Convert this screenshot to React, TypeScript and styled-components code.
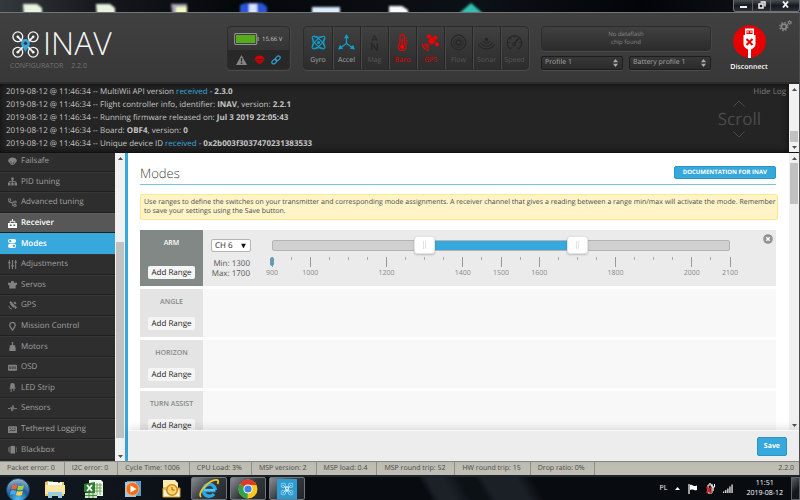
import React, { useState } from "react";
import styled, { createGlobalStyle, css } from "styled-components";

const BLUE = "#37a8db";

const GlobalStyle = createGlobalStyle`
  *, *::before, *::after { box-sizing: border-box; }
  html, body, #root { height: 100%; }
  body {
    margin: 0;
    overflow: hidden;
    background: #0a0e14;
    font-family: "Open Sans", "Noto Sans", sans-serif;
    font-size: 8px;
    line-height: 10px;
    color: #555;
    text-rendering: geometricPrecision;
  }
  button, select, input { font: inherit; margin: 0; text-rendering: inherit; }
  button { cursor: pointer; }
  h1, h2, p, ul { margin: 0; padding: 0; font-weight: inherit; }
  ul { list-style: none; }
  svg { display: block; }
`;

const Desktop = styled.div`
  display: flex;
  flex-direction: column;
  height: 100vh;
  min-height: 0;
`;

/* ---------- window frame ---------- */

const TitleBar = styled.div`
  position: relative;
  display: flex;
  justify-content: flex-end;
  flex: none;
  height: 12px;
  overflow: hidden;
  background: linear-gradient(90deg, #34393d 0, #15181c 12%, #05080b 30%, #0c1117 60%, #020408 80%, #10151b 100%);
`;

const Backdrop = styled.svg`
  position: absolute;
  inset: 0;
`;

const WindowButtons = styled.div`
  position: relative;
  display: flex;
  border: 1px solid #6e7276;
  border-top: 0;
  border-radius: 0 0 3px 3px;
  background: linear-gradient(#4a4f55, #171b20 50%, #2a2f35);
`;

const WindowButton = styled.button<{ $wide?: boolean }>`
  display: grid;
  place-items: center;
  width: ${(p) => (p.$wide ? 29 : 18)}px;
  padding: 0 0 2px;
  border: 0;
  border-left: 1px solid #5a5e63;
  background: none;
  color: #f2f2f2;
  &:first-child { border-left: 0; }
`;

const Window = styled.div`
  display: flex;
  flex-direction: column;
  flex: 1;
  min-height: 0;
  border-top: 1px solid #74777a;
  border-right: 1px solid #4a4d50;
`;

/* ---------- header ---------- */

const Header = styled.header`
  display: flex;
  align-items: flex-start;
  flex: none;
  padding: 13px 7px 9px 10px;
  gap: 13px;
  background: linear-gradient(#3f403f, #373837);
  border-bottom: 2px solid #2c2c2c;
`;

const Brand = styled.div`
  flex: 1;
  padding-left: 2px;
  color: #f4f4f4;
`;

const BrandRow = styled.div`
  display: flex;
  align-items: center;
  gap: 4px;
  height: 36px;
`;

const BrandName = styled.span`
  font-size: 32px;
  line-height: 36px;
  font-weight: 300;
`;

const BrandNote = styled.p`
  display: flex;
  gap: 8px;
  margin-left: -2px;
  color: #747574;
  font-size: 7px;
`;

const panel = css`
  border: 1px solid #2c2c2c;
  border-radius: 4px;
  box-shadow: 0 1px 0 #4b4b4b, 1px 0 0 #464646;
  background: linear-gradient(#404040, #2c2c2c);
`;

const BatteryPanel = styled.div`
  ${panel}
  display: flex;
  flex-direction: column;
  width: 63px;
  height: 44px;
  overflow: hidden;
`;

const BatteryTop = styled.div`
  display: flex;
  align-items: center;
  gap: 3px;
  height: 23px;
  padding: 0 0 0 6px;
  color: #c8c8c8;
  font-size: 6px;
  white-space: nowrap;
`;

const BatteryBottom = styled.div`
  display: flex;
  align-items: center;
  justify-content: space-between;
  flex: 1;
  padding: 0 8px;
  background: #282828;
`;

const Sensors = styled.ul`
  ${panel}
  display: flex;
  height: 44px;
`;

const tones = { on: "#0f9fce", off: "#272727", bad: "#f00000" };
type Tone = keyof typeof tones;

const Sensor = styled.li<{ $tone: Tone }>`
  display: flex;
  flex-direction: column;
  align-items: center;
  justify-content: space-between;
  width: 28px;
  padding: 7px 0 3px;
  border-left: 1px solid #262626;
  box-shadow: inset 1px 0 0 #484848;
  color: ${(p) => tones[p.$tone]};
  &:first-child { border-left: 0; box-shadow: none; }
`;

const SensorLabel = styled.span<{ $tone: Tone }>`
  color: ${(p) => (p.$tone === "on" ? "#a8a8a8" : p.$tone === "bad" ? "#c00808" : "#565656")};
  font-size: 7px;
  font-weight: ${(p) => (p.$tone === "bad" ? 600 : 400)};
`;

const Profiles = styled.div`
  display: flex;
  flex-direction: column;
  gap: 5px;
  width: 170px;
  margin-left: -1px;
`;

const Dataflash = styled.p`
  ${panel}
  height: 25px;
  padding: 3px 30px 0;
  text-align: center;
  line-height: 8px;
  font-size: 6px;
  color: #858585;
`;

const ProfileRow = styled.div`
  display: grid;
  grid-template-columns: 1fr 1fr;
  gap: 6px;
`;

const SelectBox = styled.label`
  position: relative;
  display: block;
`;

const SelectArrow = styled.svg`
  position: absolute;
  top: 50%;
  right: 5px;
  transform: translateY(-50%);
  pointer-events: none;
`;

const DarkSelect = styled.select`
  appearance: none;
  display: block;
  width: 100%;
  height: 14px;
  padding: 0 3px;
  border: 1px solid #1d1d1d;
  border-radius: 2px;
  box-shadow: 0 1px 0 #4c4c4c;
  background: linear-gradient(#373737, #2b2b2b);
  color: #a4a4a4;
  font-size: 7px;
  line-height: 12px;
`;

const ConnectButton = styled.button`
  display: flex;
  flex-direction: column;
  align-items: center;
  gap: 5px;
  width: 40px;
  margin: -1px 0 0 5px;
  padding: 0;
  border: 0;
  background: none;
  color: #fff;
  font-size: 7px;
  font-weight: 600;
`;

const GearButton = styled.button`
  margin: -7px 0 0 -3px;
  padding: 0;
  border: 0;
  background: none;
  color: #858585;
`;

/* ---------- log ---------- */

const LogArea = styled.section`
  display: flex;
  flex: none;
  border-bottom: 1px solid #111;
  background: #242424;
`;

const LogBody = styled.div`
  display: flex;
  flex: 1;
  padding: 1px 3px 2px 6px;
  color: #c4c4c4;
  line-height: 13px;
  box-shadow: inset 0 0 6px #0c0c0c;
`;

const LogLines = styled.div`
  flex: 1;
  a { color: ${BLUE}; text-decoration: none; }
  b { font-weight: 700; }
`;

const LogSide = styled.div`
  display: flex;
  flex-direction: column;
  align-items: flex-end;
  color: #666;
`;

const HideLog = styled.button`
  padding: 0;
  border: 0;
  background: none;
  color: #7a7a7a;
  line-height: 13px;
`;

const ScrollHint = styled.div`
  display: flex;
  flex-direction: column;
  align-items: center;
  margin: 2px 25px 0 0;
  color: #4b4b4b;
  font-size: 17px;
  line-height: 24px;
`;

/* ---------- scroll bar ---------- */

const Bar = styled.div`
  display: flex;
  flex-direction: column;
  align-items: center;
  flex: none;
  width: 10px;
  background: #f1f1f1;
`;

const BarEnd = styled.div`
  display: grid;
  place-items: center;
  height: 10px;
  color: #505050;
`;

const BarSpace = styled.div<{ $grow: number }>`
  flex: ${(p) => p.$grow} 1 0;
`;

const BarThumb = styled(BarSpace)`
  width: 8px;
  background: #c1c1c1;
`;

const Triangle = ({ down }: { down?: boolean }) => (
  <svg width="5" height="3" viewBox="0 0 5 3" fill="currentColor">
    <path d={down ? "M0 0h5L2.500 3z" : "M0 3h5L2.500 0z"} />
  </svg>
);

const ScrollBar = ({ before, thumb, after }: { before: number; thumb: number; after: number }) => (
  <Bar aria-hidden>
    <BarEnd><Triangle /></BarEnd>
    <BarSpace $grow={before} />
    <BarThumb $grow={thumb} />
    <BarSpace $grow={after} />
    <BarEnd><Triangle down /></BarEnd>
  </Bar>
);

/* ---------- navigation ---------- */

const Main = styled.div`
  display: flex;
  flex: 1;
  min-height: 0;
  background: #fff;
`;

const Nav = styled.nav`
  display: flex;
  flex: none;
  border-right: 3px solid ${BLUE};
  overflow: hidden;
`;

const NavList = styled.ul`
  display: flex;
  flex-direction: column;
  width: 115px;
  margin-top: -2px;
  padding-bottom: 1px;
  background: #2e2e2e;
`;

const NavItem = styled.li`
  display: flex;
  flex: 1;
  min-height: 0;
`;

const NavLink = styled.a<{ $state?: "hover" | "active" }>`
  display: flex;
  align-items: center;
  flex: 1;
  gap: 4px;
  padding-left: 8px;
  border-top: 1px solid #383838;
  border-bottom: 1px solid #202020;
  background: #2e2e2e;
  color: #a0a0a0;
  text-decoration: none;
  svg { color: #828282; }
  ${(p) =>
    p.$state === "hover" &&
    css`
      background: #575757;
      color: #fff;
      font-weight: 600;
      border-top-color: #606060;
      svg { color: #fff; }
    `}
  ${(p) =>
    p.$state === "active" &&
    css`
      background: ${BLUE};
      color: #fff;
      font-weight: 600;
      border-top-color: ${BLUE};
      border-bottom-color: ${BLUE};
      svg { color: #fff; }
    `}
`;

/* ---------- content ---------- */

const Column = styled.div`
  display: flex;
  flex-direction: column;
  flex: 1;
  min-width: 0;
`;

const Scroller = styled.div`
  display: flex;
  flex: 1;
  min-height: 0;
`;

const Content = styled.main`
  flex: 1;
  min-width: 0;
  padding: 10px 13px 0 12px;
  overflow: hidden;
`;

const TitleRow = styled.div`
  display: flex;
  align-items: center;
  justify-content: space-between;
  height: 22px;
  padding-bottom: 2px;
  border-bottom: 1px solid #7cc0e4;
`;

const Title = styled.h1`
  font-size: 13px;
  line-height: 18px;
  font-weight: 300;
  color: #444;
`;

const DocLink = styled.a`
  padding: 1px 8px;
  border: 1px solid #2a95c7;
  border-radius: 2px;
  background: ${BLUE};
  color: #fff;
  font-size: 6px;
  line-height: 9px;
  font-weight: 700;
  text-decoration: none;
`;

const Note = styled.p`
  margin: 9px -2px 10px 0;
  padding: 3px 0 3px 3px;
  border: 1px solid #fbe88a;
  border-radius: 2px;
  background: #fff4c8;
  color: #4a4a4a;
  font-size: 7px;
  line-height: 9px;
`;

const Modes = styled.div`
  display: flex;
  flex-direction: column;
  gap: 3px;
`;

const ModeRow = styled.section<{ $on?: boolean }>`
  display: flex;
  min-height: ${(p) => (p.$on ? 56 : 48)}px;
  background: ${(p) => (p.$on ? "#ebebeb" : "#f8f8f8")};
`;

const ModeHead = styled.div<{ $on?: boolean }>`
  display: flex;
  flex-direction: column;
  align-items: center;
  justify-content: space-between;
  width: 63px;
  padding: 9px 0 7px;
  background: ${(p) => (p.$on ? "#828885" : "#e4e4e4")};
  color: ${(p) => (p.$on ? "#fff" : "#828885")};
`;

const ModeName = styled.h2`
  font-size: 7px;
  line-height: 10px;
  font-weight: 600;
`;

const AddButton = styled.button`
  padding: 0 3px;
  border: 0;
  border-radius: 2px;
  background: #f5f5f5;
  color: #222;
  line-height: 13px;
`;

const Range = styled.div`
  display: flex;
  flex: 1;
  align-items: flex-start;
  padding: 4px 3px 0 8px;
`;

const Channel = styled.div`
  display: flex;
  flex-direction: column;
  gap: 7px;
  width: 40px;
  margin: 5px 21px 0 0;
`;

const ChannelSelect = styled.select`
  appearance: none;
  display: block;
  width: 100%;
  height: 13px;
  padding: 0 3px;
  border: 1px solid #b5b5b5;
  border-radius: 2px;
  background: #fff;
  color: #222;
  line-height: 11px;
`;

const Limits = styled.div`
  padding-right: 1px;
  text-align: right;
  white-space: nowrap;
  color: #555;
`;

const Slider = styled.div`
  flex: 1;
  margin-right: 33px;
  padding-top: 6px;
`;

const Track = styled.div`
  position: relative;
  height: 11px;
  border: 1px solid #b4b4b4;
  border-radius: 2px;
  background: #d0d0d0;
`;

const Fill = styled.div`
  position: absolute;
  top: 0;
  bottom: 0;
  background: ${BLUE};
`;

const Thumb = styled.input`
  appearance: none;
  position: absolute;
  top: -5px;
  left: -11px;
  width: calc(100% + 22px);
  height: 18px;
  background: none;
  pointer-events: none;
  &::-webkit-slider-thumb {
    appearance: none;
    pointer-events: auto;
    width: 21px;
    height: 18px;
    border: 1px solid #e3e3e3;
    border-radius: 3px;
    background:
      linear-gradient(90deg, #e2e2e2 1px, transparent 1px 2px, #e2e2e2 2px) center / 3px 8px no-repeat,
      #fff;
    box-shadow: 0 1px 2px rgba(0, 0, 0, 0.2);
  }
`;

const Scale = styled.div`
  position: relative;
  height: 28px;
  margin-top: 6px;
`;

const Tick = styled.div<{ $major?: boolean }>`
  position: absolute;
  display: flex;
  flex-direction: column;
  align-items: center;
  gap: 2px;
  width: 20px;
  margin-left: -10px;
  color: #8a8a8a;
  font-size: 7px;
  &::before {
    content: "";
    width: 1px;
    height: ${(p) => (p.$major ? 10 : 3)}px;
    background: ${(p) => (p.$major ? "#999" : "#aaa")};
  }
`;

const Marker = styled.div`
  position: absolute;
  top: 0;
  width: 4px;
  height: 9px;
  margin-left: -2px;
  border: 1px solid #8a9298;
  border-radius: 2px;
  background: ${BLUE};
`;

const CloseButton = styled.button`
  padding: 0;
  border: 0;
  background: none;
  color: #919191;
`;

const Toolbar = styled.footer`
  display: flex;
  align-items: center;
  justify-content: flex-end;
  flex: none;
  height: 31px;
  padding-right: 12px;
  border-top: 1px solid #fafafa;
  background: #ededed;
  box-shadow: 0 -2px 8px rgba(0, 0, 0, 0.12);
  z-index: 1;
`;

const SaveButton = styled.button`
  padding: 3px 6px;
  border: 1px solid #2a95c7;
  border-radius: 2px;
  background: ${BLUE};
  color: #fff;
  font-size: 7px;
  font-weight: 700;
  line-height: 11px;
`;

/* ---------- status bar ---------- */

const StatusBar = styled.div`
  display: flex;
  flex: none;
  border-top: 1px solid #8b8b86;
  background: #bfbeb4;
  color: #4a4a4a;
  font-size: 7px;
  line-height: 13px;
`;

const Status = styled.span`
  padding: 0 9px 0 7px;
  border-right: 1px solid #8f8f88;
`;

const Version = styled.span`
  margin-left: auto;
  padding-right: 5px;
`;

/* ---------- task bar ---------- */

const TaskBar = styled.div`
  display: flex;
  align-items: stretch;
  flex: none;
  height: 25px;
  border-top: 2px solid #1c242c;
  background: linear-gradient(60deg, #10161d 0 12%, #080c11 30% 53%, #1b2127 54% 56%, #0c1116 58% 60%, #1a2026 61% 65%, #080c11 67%);
  color: #fff;
`;

const Task = styled.button<{ $open?: boolean }>`
  display: grid;
  place-items: center;
  width: ${(p) => (p.$open ? 36 : 39)}px;
  margin-right: ${(p) => (p.$open ? 3 : 0)}px;
  padding: 0;
  border: 1px solid ${(p) => (p.$open ? "#70757a" : "transparent")};
  border-radius: 2px;
  background: ${(p) => (p.$open ? "linear-gradient(135deg, #8a8e92, #33383d 50%, #22272c)" : "none")};
`;

const StartButton = styled(Task)`
  width: 35px;
`;

const Tray = styled.div`
  display: flex;
  align-items: center;
  margin-left: auto;
  gap: 8px;
`;

const Language = styled.span`
  margin-right: 0;
  font-size: 7px;
`;

const Clock = styled.time`
  margin: 0 8px 0 5px;
  text-align: center;
  font-size: 7px;
  line-height: 10px;
`;

const ShowDesktop = styled.button`
  align-self: stretch;
  width: 9px;
  margin-left: -8px;
  padding: 0;
  border: 1px solid #5b6065;
  background: linear-gradient(135deg, #5b6065, #14181d 60%);
`;

/* ---------- drawings ---------- */

const rotors = [[5.6, 5.6], [20.4, 5.6], [5.6, 20.4], [20.4, 20.4]];

const Quad = ({ size, pin = BLUE, hole = "#3b3c3b", color = "#f4f4f4" }: { size: number; pin?: string; hole?: string; color?: string }) => (
  <svg width={size} height={size} viewBox="0 0 26 26" fill="none" stroke={color} strokeWidth="1.300">
    {rotors.map(([x, y]) => (
      <g key={`${x}-${y}`}>
        <circle cx={x} cy={y} r="4.700" />
        <circle cx={x} cy={y} r="1.300" fill={color} stroke="none" />
      </g>
    ))}
    <path d="M5.600 5.600L11 11M20.400 5.600L15 11M5.600 20.400l6-6M20.400 20.400l-6-6" strokeWidth="1.600" />
    <path d="M13 20.500c-1-3.500-4.200-5.500-4.200-8.700a4.200 4.200 0 0 1 8.400 0c0 3.200-3.200 5.200-4.200 8.700z" fill={pin} stroke="none" />
    <circle cx="13" cy="11.800" r="1.700" fill={hole} stroke="none" />
  </svg>
);

const sensorArt: Record<string, React.ReactNode> = {
  Gyro: (
    <g fill="none" stroke="currentColor" strokeWidth="1.100">
      <ellipse cx="8" cy="8" rx="3" ry="8.300" transform="rotate(45 8 8)" />
      <ellipse cx="8" cy="8" rx="3" ry="8.300" transform="rotate(-45 8 8)" />
      <path d="M4 2.500h8M4 13.500h8M2.500 4v8M13.500 4v8" strokeWidth=".9" />
      <circle cx="8" cy="8" r="1" fill="currentColor" />
    </g>
  ),
  Accel: (
    <g fill="currentColor">
      <path d="M8 2v7l-5.500 4M8 9l5.500 4" fill="none" stroke="currentColor" strokeWidth="1.300" />
      <path d="M8-.500l2.500 4.300h-5zM-.500 15l2-4.700 3 4zM16.500 15l-2-4.700-3 4z" />
    </g>
  ),
  Mag: (
    <g fill="none" stroke="currentColor" strokeWidth="1.400">
      <path d="M5.500 6L8 .500 10.500 6 8 4.800z" strokeWidth="1" />
      <path d="M5.200 16V9l5.600 7V9" />
    </g>
  ),
  Baro: (
    <g>
      <path d="M5.500 9V2.300a2.200 2.200 0 0 1 4.400 0V9a3.900 3.900 0 1 1-4.400 0z" fill="none" stroke="currentColor" strokeWidth="1.100" />
      <circle cx="7.700" cy="12.300" r="2.200" fill="currentColor" />
      <path d="M7.700 4v8M11.500 3.500h1.500M11.500 6h1.500M11.500 8.500h1.500" stroke="currentColor" strokeWidth="1.100" />
    </g>
  ),
  GPS: (
    <g fill="currentColor">
      <rect x="6.500" y="3.500" width="5.500" height="6" rx="1.500" transform="rotate(45 9.200 6.500)" />
      <path d="M6-.500l3.500 2L7.500 4.500 4 2.500zM12 9.500l2-2.500 3 2.500-2 3zM12.500.500l3 2.500-2.500 2.500-2.500-2z" />
      <path d="M6.500 11.500A3.500 3.500 0 0 1 4 9" stroke="currentColor" strokeWidth="1.400" fill="none" />
      <path d="M6.500 13.700A5.500 5.500 0 0 1 2 9M6.500 16A8 8 0 0 1-.300 9" fill="none" stroke="currentColor" strokeWidth="1.200" />
    </g>
  ),
  Flow: (
    <g fill="none" stroke="currentColor" strokeWidth="1.200">
      <circle cx="8" cy="8" r="7.300" /><circle cx="8" cy="8" r="4.800" strokeWidth=".8" />
      <circle cx="8" cy="8" r="2.400" strokeWidth="1.500" />
    </g>
  ),
  Sonar: (
    <g fill="none" stroke="currentColor" strokeWidth="1.200">
      <circle cx="8" cy="5" r="1.200" fill="currentColor" />
      <path d="M4.500 6.500a3.800 3.800 0 0 0 7 0M2 8a6.700 6.700 0 0 0 12 0M-.300 9.500c3.500 6.500 13.100 6.500 16.600 0" />
    </g>
  ),
  Speed: (
    <g fill="none" stroke="currentColor" strokeWidth="1.200">
      <path d="M4 14.500a7.300 7.300 0 1 1 8 0" />
      <path d="M8 1v2.500M1 8h2.500M12.500 8H15M3 3l1.700 1.700M4 14.500l1-1.500M12 14.500L11 13" />
      <path d="M7.500 9.500L12 4" strokeWidth="1.800" /><circle cx="7.500" cy="9.800" r="1.300" />
    </g>
  ),
};

const sensors: [string, Tone][] = [
  ["Gyro", "on"], ["Accel", "on"], ["Mag", "off"], ["Baro", "bad"],
  ["GPS", "bad"], ["Flow", "off"], ["Sonar", "off"], ["Speed", "off"],
];

const Parachute = () => (
  <path d="M0 4.500C.5 1.500 2.500.5 5 .5s4.500 1 5 4L6.200 9H3.800zM2.500 5l2 3M7.500 5l-2 3" fill="currentColor" />
);

const navItems: [string, React.ReactNode][] = [
  ["Failsafe", <><Parachute /><path d="M3 5l1.500 3.500M7 5L5.500 8.500" stroke="#2e2e2e" strokeWidth=".6" /></>],
  ["PID tuning", <><path d="M3.700.500h2.600v3H3.700zM0 6.500h2.700v3H0zM3.700 6.500h2.600v3H3.700zM7.300 6.500H10v3H7.300z" fill="currentColor" /><path d="M5 3v4M1.300 7V5h7.400v2" stroke="currentColor" strokeWidth=".9" fill="none" /></>],
  ["Advanced tuning", <path d="M.5 1h2.500v2.500H.5zM1.500 3.500V5H5v3.500h1.500M5 4.500h1.500M6.500 3.500H9v2H6.500zM6.500 7.200H9v2H6.500z" stroke="currentColor" fill="none" />],
  ["Receiver", <><path d="M0 4.500h10V10H0z" fill="currentColor" /><path d="M2.500 4.500V2.500h5v2M5 2.500V0" stroke="currentColor" fill="none" /><path d="M2 6.200h2v1.500H2zM6 6.200h2v1.500H6z" fill="#575757" /></>],
  ["Modes", <><rect x="0" y="0" width="9" height="4.600" rx="2.300" fill="currentColor" /><rect x="0" y="5.400" width="9" height="4.600" rx="2.300" fill="currentColor" /><circle cx="2.500" cy="2.300" r="1.300" fill={BLUE} /><circle cx="6.500" cy="7.700" r="1.300" fill={BLUE} /></>],
  ["Adjustments", <path d="M1.500 0v10M5 0v10M8.500 0v10M0 3h3M3.500 6.500h3M7 2.500h3" stroke="currentColor" strokeWidth="1.200" />],
  ["Servos", <path d="M3.500 1h3v2H10v2L8.500 6v3.500h-7V6L0 5V3h3.500z" fill="currentColor" />],
  ["GPS", <><path d="M3 0l2 2-1.500 1.500L1.500 2zM4.500 2L8 5.500 6 7.500 2.500 4zM8 5l2 2-1.500 2L7 7.500zM7.500.500l2 2-1.500 1.500L6 2z" fill="currentColor" /><path d="M1 5.500A4 4 0 0 0 4.500 9" stroke="currentColor" fill="none" /></>],
  ["Mission Control", <path d="M5 9.500C4.500 7 2 6 2 3.500a3 3 0 0 1 6 0C8 6 5.500 7 5 9.500z" stroke="currentColor" strokeWidth="1.400" fill="none" />],
  ["Motors", <path d="M4.300 0h1.400v3.500H8V6h.5v4h-7V6H2V3.500h2.300z" fill="currentColor" />],
  ["OSD", <><rect x="0" y="2" width="10" height="6.500" rx="1" fill="currentColor" /><path d="M1.500 4.200h1.500v2H1.500zM4.300 4.200h1.400v2H4.300zM7 4.200h1.500v2H7z" fill="none" stroke="#2e2e2e" strokeWidth=".6" /></>],
  ["LED Strip", <><path d="M2.500 5V2.500a2.500 2.500 0 0 1 5 0V5h.8v1.300H1.700V5z" fill="currentColor" /><path d="M3.500 6v4M6.500 6v3" stroke="currentColor" strokeWidth="1.100" /></>],
  ["Sensors", <path d="M0 5h2.500l1-1.500L4.500 8l1-6.500L6.500 6l.8-1H10" stroke="currentColor" fill="none" />],
  ["Tethered Logging", <><rect x="0" y="1.500" width="10" height="7.500" rx=".8" fill="currentColor" /><path d="M1.500 3.500h2M4.500 3.500h1M6.500 3.500h2M1.500 7l2-1.500 2 1 3-1" stroke="#2e2e2e" strokeWidth=".8" fill="none" /></>],
  ["Blackbox", <><rect x="2.800" y="1" width="5" height="8.500" fill="currentColor" /><path d="M.500 2.500v5M2 2v6.500M9.300 2.500v5.500" stroke="currentColor" strokeWidth=".7" /></>],
];

const Gear = ({ size }: { size: number }) => (
  <svg width={size} height={size} viewBox="0 0 12 12" fill="none" stroke="currentColor">
    <circle cx="4.500" cy="7" r="2.300" strokeWidth="1.700" />
    <circle cx="4.500" cy="7" r="3.700" strokeWidth="1.300" strokeDasharray="1.450 1.450" />
    <circle cx="9.800" cy="3.300" r="1.100" strokeWidth="1" />
    <circle cx="9.800" cy="3.300" r="1.800" strokeWidth=".8" strokeDasharray=".9 .9" />
  </svg>
);

const UpDown = () => (
  <SelectArrow width="5" height="8" viewBox="0 0 5 8" fill="#aaa">
    <path d="M0 3.200h5L2.500 0zM0 4.800h5L2.500 8z" />
  </SelectArrow>
);

const logs: [string, React.ReactNode][] = [
  ["2019-08-12 @ 11:46:34", <>MultiWii API version <a href="#log">received</a> - <b>2.3.0</b></>],
  ["2019-08-12 @ 11:46:34", <>Flight controller info, identifier: <b>INAV</b>, version: <b>2.2.1</b></>],
  ["2019-08-12 @ 11:46:34", <>Running firmware released on: <b>Jul 3 2019 22:05:43</b></>],
  ["2019-08-12 @ 11:46:34", <>Board: <b>OBF4</b>, version: <b>0</b></>],
  ["2019-08-12 @ 11:46:34", <>Unique device ID <a href="#log">received</a> - <b>0x2b003f3037470231383533</b></>],
];

const statuses = [
  "Packet error: 0", "I2C error: 0", "Cycle Time: 1006", "CPU Load: 3%", "MSP version: 2",
  "MSP load: 0.4", "MSP round trip: 52", "HW round trip: 15", "Drop ratio: 0%",
];

const LOW = 900;
const HIGH = 2100;
const labelled = [900, 1000, 1200, 1400, 1500, 1600, 1800, 2000, 2100];
const ticks = Array.from({ length: 25 }, (_, i) => LOW + i * 50);
const percent = (v: number) => `${((v - LOW) / (HIGH - LOW)) * 100}%`;

function ArmRange() {
  const [min, setMin] = useState(1300);
  const [max, setMax] = useState(1700);
  return (
    <Range>
      <Channel>
        <SelectBox>
          <ChannelSelect aria-label="Channel" defaultValue="CH 6">
            {["CH 5", "CH 6", "CH 7", "CH 8"].map((c) => <option key={c}>{c}</option>)}
          </ChannelSelect>
          <SelectArrow width="5" height="5" viewBox="0 0 5 5" fill="#111"><path d="M0 0h5L2.500 5z" /></SelectArrow>
        </SelectBox>
        <Limits><p>Min: {min}</p><p>Max: {max}</p></Limits>
      </Channel>
      <Slider>
        <Track>
          <Fill style={{ left: percent(min), right: `calc(100% - ${percent(max)})` }} />
          <Thumb type="range" aria-label="Minimum" min={LOW} max={HIGH} step={25} value={min}
            onChange={(e) => setMin(Math.min(+e.target.value, max))} />
          <Thumb type="range" aria-label="Maximum" min={LOW} max={HIGH} step={25} value={max}
            onChange={(e) => setMax(Math.max(+e.target.value, min))} />
        </Track>
        <Scale>
          {ticks.map((t) => {
            const major = labelled.includes(t);
            return <Tick key={t} $major={major} style={{ left: percent(t) }}>{major && t}</Tick>;
          })}
          <Marker style={{ left: percent(900) }} />
        </Scale>
      </Slider>
      <CloseButton aria-label="Delete range">
        <svg width="10" height="10" viewBox="0 0 10 10">
          <circle cx="5" cy="5" r="4.800" fill="currentColor" />
          <path d="M3.200 3.200l3.600 3.600M6.800 3.200L3.200 6.800" stroke="#fff" strokeWidth="1.400" />
        </svg>
      </CloseButton>
    </Range>
  );
}

const Mode = ({ name, children }: { name: string; children?: React.ReactNode }) => (
  <ModeRow $on={!!children}>
    <ModeHead $on={!!children}>
      <ModeName>{name}</ModeName>
      <AddButton>Add Range</AddButton>
    </ModeHead>
    {children}
  </ModeRow>
);

export default function App() {
  return (
    <Desktop>
      <GlobalStyle />
      <TitleBar>
        <Backdrop width="500" height="12" viewBox="0 0 500 12">
          <defs><filter id="soft" x="-10%" y="-50%" width="120%" height="200%"><feGaussianBlur stdDeviation="1" /></filter></defs>
          <g filter="url(#soft)">
            <path d="M23 4h14l5 4v9H24z" fill="#eaf3e2" />
            <path d="M96 4h14l5 4v9H97z" fill="#eaf3e2" />
            <path d="M171 4h16v13h-14z" fill="#a8a4b8" /><path d="M176 7h11v10h-11z" fill="#f3fac4" />
            <path d="M240 5l6-2h16l5 4v10h-27z" fill="#2c55d8" /><path d="M249 4h8v13h-8z" fill="#d6e4ff" />
            <path d="M312 7h28v10h-28z" fill="#dbeefd" />
            <path d="M389 6h13l6 4v7h-19z" fill="#f8fcff" />
            <path d="M455 17l16-14 16 14z" fill="#31c0b2" />
          </g>
        </Backdrop>
        <WindowButtons>
          <WindowButton aria-label="Minimize">
            <svg width="7" height="8" viewBox="0 0 7 8"><path d="M0 5h7v2H0z" fill="currentColor" /></svg>
          </WindowButton>
          <WindowButton aria-label="Restore">
            <svg width="8" height="8" viewBox="0 0 8 8" fill="none" stroke="currentColor" strokeWidth="1.500"><path d="M1 3h4v4H1zM2.500 1H7v4.500" /></svg>
          </WindowButton>
          <WindowButton $wide aria-label="Close">
            <svg width="7" height="7" viewBox="0 0 7 7" stroke="currentColor" strokeWidth="1.900"><path d="M1 .500l5 6M6 .500l-5 6" /></svg>
          </WindowButton>
        </WindowButtons>
      </TitleBar>

      <Window>
        <Header>
          <Brand>
            <BrandRow><Quad size={27} /><BrandName>INAV</BrandName></BrandRow>
            <BrandNote><span>CONFIGURATOR</span><span>2.2.0</span></BrandNote>
          </Brand>

          <BatteryPanel>
            <BatteryTop>
              <svg width="25" height="12" viewBox="0 0 25 12">
                <rect x=".7" y=".7" width="22" height="10.600" rx="1" fill="#222" stroke="#929292" strokeWidth="1.200" />
                <rect x="2" y="2" width="19.500" height="8" fill="#56ac1d" />
                <path d="M23.500 4h1.200v4h-1.200z" fill="#929292" />
              </svg>
              15.66 V
            </BatteryTop>
            <BatteryBottom>
              <svg width="11" height="10" viewBox="0 0 11 10"><path d="M5.500 0L11 10H0z" fill="#858585" /><path d="M5.500 3v3.500M5.500 7.500V9" stroke="#282828" strokeWidth="1.200" /></svg>
              <svg width="11" height="10" viewBox="0 0 10 10" color="#d40000"><Parachute /><path d="M3 4.500l1.500 4M7 4.500l-1.500 4M0 4.500h10" stroke="#282828" strokeWidth=".5" /></svg>
              <svg width="10" height="10" viewBox="0 0 10 10" fill="none" stroke="#2f9fd0" strokeWidth="1.200">
                <rect x="4" y="1.700" width="5.500" height="3.400" rx="1.700" transform="rotate(-45 6.700 3.400)" />
                <rect x=".6" y="4.900" width="5.500" height="3.400" rx="1.700" transform="rotate(-45 3.300 6.600)" />
              </svg>
            </BatteryBottom>
          </BatteryPanel>

          <Sensors>
            {sensors.map(([name, tone]) => (
              <Sensor key={name} $tone={tone}>
                <svg width="17" height="17" viewBox="-.5 -.5 17 17">{sensorArt[name]}</svg>
                <SensorLabel $tone={tone}>{name}</SensorLabel>
              </Sensor>
            ))}
          </Sensors>

          <Profiles>
            <Dataflash>No dataflash<br />chip found</Dataflash>
            <ProfileRow>
              <SelectBox><DarkSelect aria-label="Profile"><option>Profile 1</option><option>Profile 2</option></DarkSelect><UpDown /></SelectBox>
              <SelectBox><DarkSelect aria-label="Battery profile"><option>Battery profile 1</option><option>Battery profile 2</option></DarkSelect><UpDown /></SelectBox>
            </ProfileRow>
          </Profiles>

          <ConnectButton>
            <svg width="33" height="33" viewBox="0 0 33 33">
              <circle cx="16.500" cy="16.500" r="16.300" fill="#e80000" />
              <path d="M12 3.500h9V10h1.500v9c0 3-2 4-4.500 5.500V33h-3v-8.500C12.500 23 10.500 22 10.500 19v-9H12z" fill="#fff" />
              <path d="M13.500 5.500h6V9h-6z" fill="#e80000" /><path d="M14.500 6h1v2h-1zM17.500 6h1v2h-1z" fill="#fff" />
              <path d="M13.500 14l6 6M19.500 14l-6 6" stroke="#e80000" strokeWidth="2" />
            </svg>
            Disconnect
          </ConnectButton>
          <GearButton aria-label="Options"><Gear size={13} /></GearButton>
        </Header>

        <LogArea>
          <LogBody>
            <LogLines>
              {logs.map(([time, text], i) => <p key={i}>{time} -- {text}</p>)}
            </LogLines>
            <LogSide>
              <HideLog>Hide Log</HideLog>
              <ScrollHint>
                <svg width="12" height="7" viewBox="0 0 12 7" fill="none" stroke="currentColor"><path d="M.5 6.500L6 1l5.500 5.500" /></svg>
                Scroll
                <svg width="12" height="7" viewBox="0 0 12 7" fill="none" stroke="currentColor"><path d="M.5.500L6 6 11.500.500" /></svg>
              </ScrollHint>
            </LogSide>
          </LogBody>
          <ScrollBar before={38} thumb={11} after={0} />
        </LogArea>

        <Main>
          <Nav>
            <NavList>
              {navItems.map(([label, art]) => (
                <NavItem key={label}>
                  <NavLink href="#tab" $state={label === "Modes" ? "active" : label === "Receiver" ? "hover" : undefined}>
                    <svg width="9" height="9" viewBox="0 0 10 10">{art}</svg>
                    {label}
                  </NavLink>
                </NavItem>
              ))}
            </NavList>
            <ScrollBar before={79} thumb={197} after={13} />
          </Nav>

          <Column>
            <Scroller>
              <Content>
                <TitleRow>
                  <Title>Modes</Title>
                  <DocLink href="#docs">DOCUMENTATION FOR INAV</DocLink>
                </TitleRow>
                <Note>
                  Use ranges to define the switches on your transmitter and corresponding mode assignments. A receiver
                  channel that gives a reading between a range min/max will activate the mode. Remember to save your
                  settings using the Save button.
                </Note>
                <Modes>
                  <Mode name="ARM"><ArmRange /></Mode>
                  <Mode name="ANGLE" />
                  <Mode name="HORIZON" />
                  <Mode name="TURN ASSIST" />
                </Modes>
              </Content>
              <ScrollBar before={0} thumb={41} after={217} />
            </Scroller>
            <Toolbar><SaveButton>Save</SaveButton></Toolbar>
          </Column>
        </Main>

        <StatusBar>
          {statuses.map((s) => <Status key={s}>{s}</Status>)}
          <Version>2.2.0</Version>
        </StatusBar>
      </Window>

      <TaskBar>
        <StartButton aria-label="Start">
          <svg width="24" height="24" viewBox="0 0 24 24">
            <defs><radialGradient id="orb" cx=".5" cy=".9" r=".9"><stop offset="0" stopColor="#4fc3f0" /><stop offset=".5" stopColor="#1b5f9c" /><stop offset="1" stopColor="#9fb9cc" /></radialGradient></defs>
            <circle cx="12" cy="12" r="11.500" fill="url(#orb)" stroke="#123a5c" />
            <path d="M6 7.500c2-1 3.500-1 5.200-.2l-1 4.200c-1.700-.8-3.200-.8-5.200 0z" fill="#f0642c" />
            <path d="M12.200 7.500c2 .8 3.500.8 5.800-.2l-1 4.200c-2 1-3.800 1-5.800.2z" fill="#9ed04a" />
            <path d="M4.800 12.700c2-1 3.500-.8 5.200 0l-1 4.200c-1.700-.8-3.200-.8-5.200 0z" fill="#4aa7e8" />
            <path d="M11 12.900c2 .8 3.700.8 5.800-.2l-1 4.300c-2 1-3.800.9-5.800.1z" fill="#fbd23c" />
          </svg>
        </StartButton>
        <Task aria-label="Explorer">
          <svg width="22" height="20" viewBox="0 0 22 20">
            <path d="M1 3l3-1h4l1 1h11v14H1z" fill="#e8c96a" /><path d="M4 3h14v3H4z" fill="#fff" />
            <path d="M5 2h3v1H5z" fill="#3aa655" /><path d="M14 3h2v1h-2z" fill="#d9432f" />
            <path d="M1 6h20v9H1z" fill="#f8e6a2" /><path d="M4 19v-6h14v6h-4v-3H8v3z" fill="#8ecdf0" />
          </svg>
        </Task>
        <Task aria-label="Excel">
          <svg width="21" height="20" viewBox="0 0 21 20">
            <path d="M6 1h12l2 2v14H6z" fill="#f2f8ee" /><path d="M11 6h8M11 9h8M11 12h8M14 4v12M17 4v12" stroke="#6ba757" />
            <path d="M1 5l11-2v12L1 13z" fill="#2f7d32" /><path d="M4 6l5 6M9 6l-5 6" stroke="#fff" strokeWidth="1.800" />
            <path d="M2 14h12v5H2z" fill="#cfe3c4" /><path d="M2 16.500h12M6 14v5M10 14v5" stroke="#4b8b3b" />
          </svg>
        </Task>
        <Task aria-label="Media Player">
          <svg width="18" height="18" viewBox="0 0 18 18">
            <path d="M3 1h14v15H3z" fill="#5c9ccb" /><path d="M1 2h11v15H1z" fill="#9cc7e6" />
            <circle cx="8.500" cy="9" r="6.500" fill="#ee6f1d" stroke="#f9b57d" /><path d="M6.500 5.500v7l6-3.500z" fill="#fff" />
          </svg>
        </Task>
        <Task aria-label="Outlook">
          <svg width="21" height="20" viewBox="0 0 21 20">
            <path d="M2 1h12l3 3v8H2z" fill="#fbe9b4" /><path d="M2 9h17v9H2z" fill="#f8f3df" stroke="#d99a24" />
            <path d="M2 9l8.500 6L19 9" fill="none" stroke="#d99a24" />
            <circle cx="11" cy="11" r="5.300" fill="#fbd36b" stroke="#d18a12" strokeWidth="1.600" /><path d="M11 8v3h2.500" fill="none" stroke="#99620a" />
          </svg>
        </Task>
        <Task $open aria-label="Internet Explorer">
          <svg width="22" height="21" viewBox="0 0 22 21" fill="none">
            <path d="M17.500 12.500H7M17.300 12a6 6 0 1 0-1.300 4" stroke="#2ba7e8" strokeWidth="3.400" />
            <path d="M6 12h11" stroke="#8edcfb" strokeWidth="1" />
            <path d="M3 19C-1 15 12 1 19 2c1.500.3 1.500 2 .5 4" stroke="#f7c522" strokeWidth="1.800" />
          </svg>
        </Task>
        <Task $open aria-label="Chrome">
          <svg width="20" height="20" viewBox="0 0 20 20">
            <circle cx="10" cy="10" r="9.500" fill="#f8c81c" />
            <path d="M10 10L1.800 5.200A9.500 9.500 0 0 1 18.500 6H10z" fill="#e0382b" />
            <path d="M10 10l-.5 9.500A9.500 9.500 0 0 1 1.800 5.200z" fill="#2fa24b" />
            <circle cx="10" cy="10" r="4.600" fill="#fff" /><circle cx="10" cy="10" r="3.600" fill="#3f7fe8" />
          </svg>
        </Task>
        <Task $open aria-label="INAV Configurator">
          <svg width="20" height="20" viewBox="0 0 20 20"><rect width="20" height="20" fill="#2b9bd2" /><g transform="translate(3.500 3.500)"><Quad size={13} pin="#d6eefa" hole="#2b9bd2" color="#d6eefa" /></g></svg>
        </Task>

        <Tray>
          <Language>PL</Language>
          <Triangle />
          <svg width="10" height="10" viewBox="0 0 10 10"><path d="M1 0v10" stroke="#fff" strokeWidth="1.200" /><path d="M2 1c2-1 3 1 4 1s2 0 3-.5V6c-2 1-3-.5-4-.5S3 5.500 2 6z" fill="#fff" /></svg>
          <svg width="9" height="11" viewBox="0 0 9 11"><path d="M2 2h4v8H2zM3 .8h2" stroke="#fff" fill="none" /><path d="M6 1v3h2.500V1M7.200 4v4" stroke="#fff" fill="none" /><path d="M.5 4l5 6M5.500 4l-5 6" stroke="#e01b1b" strokeWidth="1.700" /></svg>
          <svg width="10" height="9" viewBox="0 0 10 9" fill="#e8e8e8"><path d="M0 7.500h1.300V9H0zM2.100 6h1.300v3H2.100zM4.200 4.500h1.300V9H4.200zM6.300 2.500h1.300V9H6.300zM8.400.500h1.300V9H8.400z" /></svg>
          <Clock>11:51<br />2019-08-12</Clock>
          <ShowDesktop aria-label="Show desktop" />
        </Tray>
      </TaskBar>
    </Desktop>
  );
}
